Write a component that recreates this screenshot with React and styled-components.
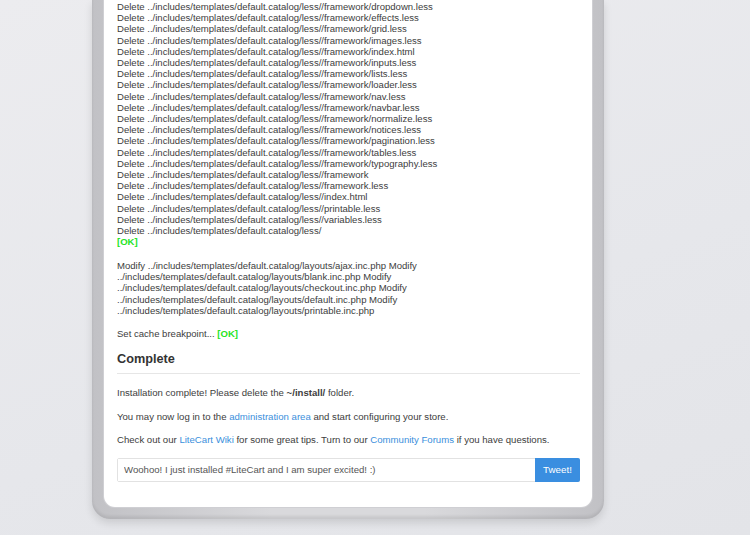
import React from "react";
import styled, { createGlobalStyle } from "styled-components";

const Global = createGlobalStyle`
  html, body {
    margin: 0;
    padding: 0;
    height: 100%;
    overflow: hidden;
  }
  body {
    background: linear-gradient(160deg, #ececef 0%, #e6e7eb 60%, #e3e4e8 100%);
    font-family: "Liberation Sans", Arial, sans-serif;
    color: #3d3d3d;
  }
`;

// Outer grey frame round the installer window
const Frame = styled.div`
  width: 488px;
  margin: 0 0 0 92px;
  padding: 0 12px 12px;
  background: linear-gradient(90deg, #c1c1c5 0%, #d9d9dc 35%, #d9d9dc 65%, #c1c1c5 100%);
  border-radius: 0 0 18px 18px;
  box-shadow: 0 4px 8px rgba(0, 0, 0, 0.12), inset 0 -3px 3px rgba(0, 0, 0, 0.08);
`;

const Sheet = styled.div`
  background: #fff;
  border-radius: 0 0 11px 11px;
  padding: 1px 12px 25px 13px;
  box-shadow: 0 0 0 1px #cfcfd3;
`;

const Block = styled.div`
  font-size: 9.55px;
  line-height: 11.2px;
  margin: 0 0 12.5px;
`;

const Ok = styled.span`
  color: #26e426;
  font-weight: bold;
`;

const Heading = styled.h2`
  font-size: 12.7px;
  line-height: 15px;
  font-weight: bold;
  margin: 0;
  padding: 0 0 6px;
  border-bottom: 1px solid #e6e6e6;
  color: #333;
`;

const Para = styled.p`
  font-size: 9.6px;
  line-height: 12px;
  margin: ${(p) => (p.$first ? "13px" : "0")} 0 11.5px;
`;

const Link = styled.a`
  color: #3b8fdc;
  text-decoration: none;
`;

const TweetForm = styled.form`
  display: flex;
  height: 22px;
  margin-top: 8.5px;
  border: 1px solid #e2e2e2;
  border-radius: 2px;
`;

const TweetInput = styled.input`
  flex: 1;
  border: 0;
  padding: 0 6px;
  font: 9.6px "Liberation Sans", Arial, sans-serif;
  color: #555;
  outline: none;
  background: #fff;
`;

const TweetButton = styled.button`
  width: 45px;
  border: 0;
  border-radius: 0 2px 2px 0;
  background: #3a8ee0;
  color: #fff;
  font: 9.8px "Liberation Sans", Arial, sans-serif;
  margin: -1px -1px -1px 0;
`;

const base = "Delete ../includes/templates/default.catalog/less/";
const deleted = [
  "/framework/dropdown.less",
  "/framework/effects.less",
  "/framework/grid.less",
  "/framework/images.less",
  "/framework/index.html",
  "/framework/inputs.less",
  "/framework/lists.less",
  "/framework/loader.less",
  "/framework/nav.less",
  "/framework/navbar.less",
  "/framework/normalize.less",
  "/framework/notices.less",
  "/framework/pagination.less",
  "/framework/tables.less",
  "/framework/typography.less",
  "/framework",
  "/framework.less",
  "/index.html",
  "/printable.less",
  "/variables.less",
  "",
];

const layouts = ["ajax", "blank", "checkout", "default", "printable"];

export default function App() {
  return (
    <>
      <Global />
      <Frame>
        <Sheet>
          <Block>
            {deleted.map((d) => (
              <div key={d}>{base + d}</div>
            ))}
            <Ok>[OK]</Ok>
          </Block>
          <Block>
            {layouts
              .map((l) => `Modify ../includes/templates/default.catalog/layouts/${l}.inc.php`)
              .join(" ")}
          </Block>
          <Block>
            Set cache breakpoint... <Ok>[OK]</Ok>
          </Block>
          <Heading>Complete</Heading>
          <Para $first>
            Installation complete! Please delete the <b>~/install/</b> folder.
          </Para>
          <Para>
            You may now log in to the <Link href="#">administration area</Link> and start
            configuring your store.
          </Para>
          <Para>
            Check out our <Link href="#">LiteCart Wiki</Link> for some great tips. Turn to our{" "}
            <Link href="#">Community Forums</Link> if you have questions.
          </Para>
          <TweetForm onSubmit={(e) => e.preventDefault()}>
            <TweetInput defaultValue="Woohoo! I just installed #LiteCart and I am super excited! :)" />
            <TweetButton type="submit">Tweet!</TweetButton>
          </TweetForm>
        </Sheet>
      </Frame>
    </>
  );
}
